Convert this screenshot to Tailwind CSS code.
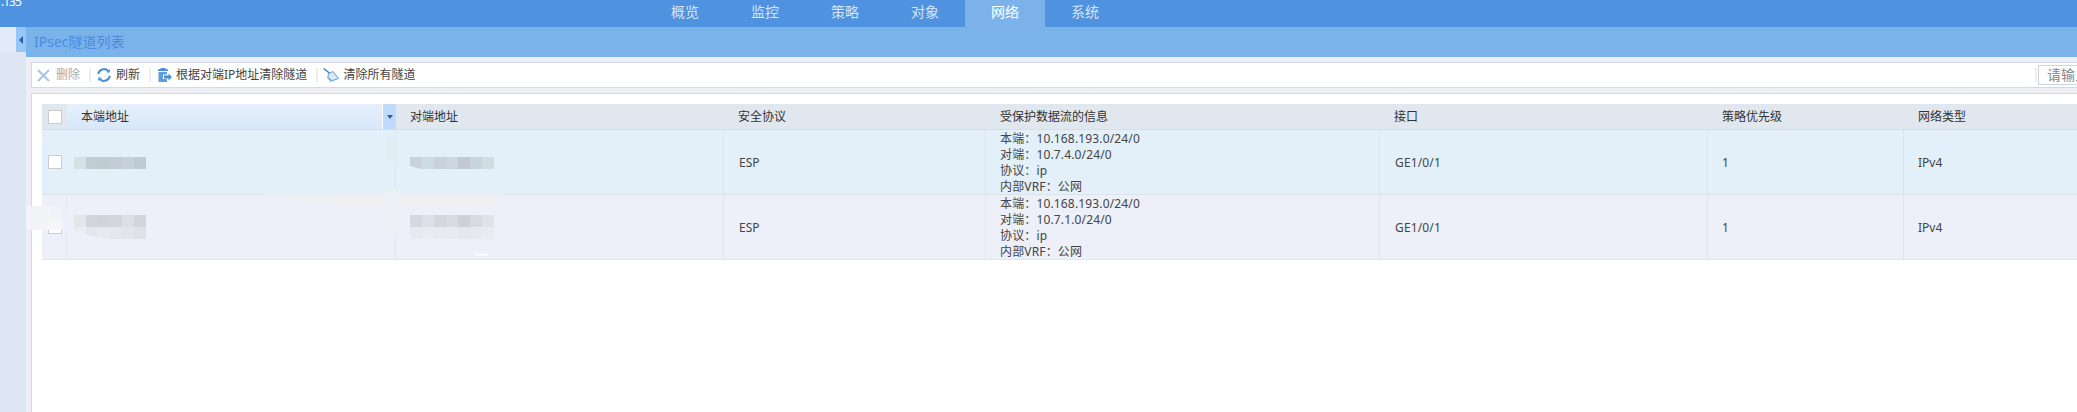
<!DOCTYPE html>
<html lang="zh-CN">
  <head>
    <meta charset="UTF-8" />
    <title>IPsec隧道列表</title>
    <script src="https://cdn.jsdelivr.net/npm/@tailwindcss/browser@4"></script>
  </head>

  <body class="relative h-[412px] w-[2077px] overflow-hidden bg-white font-['Noto_Sans','Noto_Sans_CJK_SC',sans-serif] text-[12px] text-[#444]">
    <!-- Top nav -->
    <nav class="relative flex h-[27px] bg-[#4f92e0] pl-[645px] text-[14px] leading-[24px] text-[#d5e4f6]">
      <span class="absolute left-[1px] top-[-6px] text-[12px] leading-[16px] tracking-[-1px] text-white">.135</span>
      <a class="w-20 text-center">概览</a>
      <a class="w-20 text-center">监控</a>
      <a class="w-20 text-center">策略</a>
      <a class="w-20 text-center">对象</a>
      <a class="w-20 bg-[#7bb2ea] text-center text-white">网络</a>
      <a class="w-20 text-center">系统</a>
    </nav>

    <div class="flex h-[385px]">
      <!-- Sidebar -->
      <aside class="relative w-[26px] shrink-0 bg-[#dfe6f3]">
        <div class="h-[25px] w-[16px] bg-[#e3ebf8]"></div>
        <button class="absolute right-0 top-0 flex h-[25px] w-[10px] items-center justify-center bg-[#97c5f7]">
          <span class="h-0 w-0 border-y-[4px] border-r-[4px] border-y-transparent border-r-[#2a5f9e]"></span>
        </button>
      </aside>

      <main class="flex min-w-0 flex-1 flex-col bg-[#eeeff5]">
        <h1 class="h-[30px] shrink-0 bg-[#7ab2ea] pl-2 text-[14px] leading-[30px] text-[#4a8ae0]">IPsec隧道列表</h1>

        <!-- Toolbar -->
        <div class="ml-[5px] mt-[5px] flex h-[26px] shrink-0 items-center border-y border-l border-[#d5d8e8] bg-white pl-[5px] leading-[24px]">
          <button class="flex items-center gap-[6px] text-[#aaa]">
            <svg class="size-[13px]" viewBox="0 0 13 13" fill="none" stroke="#a9c6e8" stroke-width="2.2"><path d="M1 1l11 11M12 1L1 12" /></svg>
            删除
          </button>
          <i class="ml-[9px] mr-[6px] h-[14px] w-[2px] bg-[#eee]"></i>
          <button class="flex items-center gap-[5px]">
            <svg class="size-[14px]" viewBox="0 0 14 14" fill="none" stroke="#4a90d9" stroke-width="2"><path d="M1.2 6.2A5.8 5.8 0 0 1 11.2 3M12.8 7.8A5.8 5.8 0 0 1 2.8 11" /><path d="M12.8 1v3.6H9.2zM1.2 13V9.4h3.6z" fill="#4a90d9" stroke="none" /></svg>
            刷新
          </button>
          <i class="ml-[9px] mr-[6px] h-[14px] w-[2px] bg-[#eee]"></i>
          <button class="flex items-center gap-[4px]">
            <svg class="size-[15px]" viewBox="0 0 15 15" fill="#4a90d9"><path d="M3.5 0h5v1.2h2.5V3H1V1.2h2.5z" /><path d="M1.5 4H10v2.5H6V11h4v3H1.5z" fill="#5d9cdf" /><path d="M7 7.5h4.5V5.5L15 9l-3.5 3.5v-2H7z" /></svg>
            根据对端IP地址清除隧道
          </button>
          <i class="ml-[9px] mr-[5px] h-[14px] w-[2px] bg-[#eee]"></i>
          <button class="flex items-center gap-[4px]">
            <svg class="size-[16px]" viewBox="0 0 16 16" fill="none"><path d="M0.5 1.5L6.5 6" stroke="#3f7fc4" stroke-width="1.5" /><path d="M5.5 6.5L10 4.5L15.5 11.5L10 13.5L7.5 14.5L8 12.5L6 13L6.5 11L4.8 11.3z" fill="#d9e9fa" stroke="#5d9cdf" stroke-width="1" /></svg>
            清除所有隧道
          </button>
          <i class="ml-auto mr-[1px] h-[14px] w-[2px] bg-[#eee]"></i>
          <div class="h-[20px] w-[39px] overflow-hidden whitespace-nowrap border border-r-0 border-[#c8d4e8] pl-[8px] text-[14px] leading-[18px] text-[#888]">请输入</div>
        </div>

        <!-- Table panel -->
        <section class="ml-[5px] mt-[5px] flex-1 border-l border-t border-[#d5d8e8] bg-white pl-[10px] pt-[10px]">
          <div class="grid grid-cols-[25px_329px_328px_262px_394px_328px_196px_173px] leading-[16px]">
            <!-- Header -->
            <div class="flex h-[26px] items-center border-b border-[#d8dde2] bg-[#e1e7ee] pl-[6px]"><span class="size-[14px] border border-[#ccc] bg-white"></span></div>
            <div class="relative h-[26px] border-b border-[#d8dde2] bg-gradient-to-b from-[#e6f0fc] to-[#d9e7f9] pl-[14px] leading-[25px] text-[#333]">
              本端地址
              <span class="absolute right-0 top-0 flex h-[25px] w-[14px] items-center justify-center border-l border-white bg-[#bfdafb]"><i class="border-x-[3px] border-t-[4px] border-x-transparent border-t-[#2a5f9e]"></i></span>
            </div>
            <div class="h-[26px] border-b border-[#d8dde2] bg-[#e1e7ee] pl-[14px] leading-[25px] text-[#333]">对端地址</div>
            <div class="h-[26px] border-b border-[#d8dde2] bg-[#e1e7ee] pl-[14px] leading-[25px] text-[#333]">安全协议</div>
            <div class="h-[26px] border-b border-[#d8dde2] bg-[#e1e7ee] pl-[14px] leading-[25px] text-[#333]">受保护数据流的信息</div>
            <div class="h-[26px] border-b border-[#d8dde2] bg-[#e1e7ee] pl-[14px] leading-[25px] text-[#333]">接口</div>
            <div class="h-[26px] border-b border-[#d8dde2] bg-[#e1e7ee] pl-[14px] leading-[25px] text-[#333]">策略优先级</div>
            <div class="h-[26px] border-b border-[#d8dde2] bg-[#e1e7ee] pl-[14px] leading-[25px] text-[#333]">网络类型</div>

            <!-- Row 1 -->
            <div class="flex h-[65px] items-center border-b border-[#dde3e8] bg-[#e3f0f9] pl-[6px]"><span class="size-[14px] border border-[#ccc] bg-white"></span></div>
            <div class="flex h-[65px] items-center border-b border-r border-[#dde3e8] bg-[#e3f0f9] pl-[7px]">
              <div class="mt-[2px] flex"><i class="h-[12px] w-[12px] bg-[#d6e1e6]"></i><i class="h-[12px] w-[12px] bg-[#c1cdd4]"></i><i class="h-[12px] w-[12px] bg-[#c0ccd0]"></i><i class="h-[12px] w-[12px] bg-[#c2cdd6]"></i><i class="h-[12px] w-[12px] bg-[#c7d0d9]"></i><i class="h-[12px] w-[12px] bg-[#bfcbd3]"></i></div>
            </div>
            <div class="flex h-[65px] items-center border-b border-r border-[#dde3e8] bg-[#e3f0f9] pl-[14px]">
              <div class="mt-[2px] flex"><i class="h-[12px] w-[12px] bg-[#c9d1dc]"></i><i class="h-[12px] w-[12px] bg-[#cddbe3]"></i><i class="h-[12px] w-[12px] bg-[#c9d1da]"></i><i class="h-[12px] w-[12px] bg-[#ccd6df]"></i><i class="h-[12px] w-[12px] bg-[#c3c9d4]"></i><i class="h-[12px] w-[12px] bg-[#c8d5dc]"></i><i class="h-[12px] w-[12px] bg-[#d1dce3]"></i></div>
            </div>
            <div class="h-[65px] border-b border-r border-[#dde3e8] bg-[#e3f0f9] pl-[15px] leading-[65px]">ESP</div>
            <div class="h-[65px] overflow-hidden border-b border-r border-[#dde3e8] bg-[#e3f0f9] pl-[14px] pt-[1px] tracking-[0.15px]"><p>本端：10.168.193.0/24/0</p><p>对端：10.7.4.0/24/0</p><p>协议：ip</p><p>内部VRF：公网</p></div>
            <div class="h-[65px] border-b border-r border-[#dde3e8] bg-[#e3f0f9] pl-[15px] leading-[65px] tracking-[0.15px]">GE1/0/1</div>
            <div class="h-[65px] border-b border-r border-[#dde3e8] bg-[#e3f0f9] pl-[14px] leading-[65px]">1</div>
            <div class="h-[65px] border-b border-[#dde3e8] bg-[#e3f0f9] pl-[14px] leading-[65px]">IPv4</div>

            <!-- Row 2 -->
            <div class="flex h-[65px] items-center border-b border-r border-[#e3e5ea] bg-[#edf0f8] pl-[6px]"><span class="size-[14px] border border-[#ccc] bg-white"></span></div>
            <div class="flex h-[65px] items-center border-b border-r border-[#e3e5ea] bg-[#edf0f8] pl-[7px]">
              <div class="flex flex-col">
                <div class="flex"><i class="h-[12px] w-[12px] bg-[#e4e6ea]"></i><i class="h-[12px] w-[12px] bg-[#d2d5dc]"></i><i class="h-[12px] w-[12px] bg-[#d1d3da]"></i><i class="h-[12px] w-[12px] bg-[#d3d6dd]"></i><i class="h-[12px] w-[12px] bg-[#dcdfe4]"></i><i class="h-[12px] w-[12px] bg-[#d2d4d9]"></i></div>
                <div class="flex"><i class="h-[12px] w-[12px] bg-[#ebedf3]"></i><i class="h-[12px] w-[12px] bg-[#e4e6ee]"></i><i class="h-[12px] w-[12px] bg-[#e7e9f0]"></i><i class="h-[12px] w-[12px] bg-[#e4e7ed]"></i><i class="h-[12px] w-[12px] bg-[#e3e5ea]"></i><i class="h-[12px] w-[12px] bg-[#dfe1e7]"></i></div>
              </div>
            </div>
            <div class="flex h-[65px] items-center border-b border-r border-[#e3e5ea] bg-[#edf0f8] pl-[14px]">
              <div class="flex flex-col">
                <div class="flex"><i class="h-[12px] w-[12px] bg-[#d6d7e0]"></i><i class="h-[12px] w-[12px] bg-[#dce0e7]"></i><i class="h-[12px] w-[12px] bg-[#d5d7de]"></i><i class="h-[12px] w-[12px] bg-[#d9dbe3]"></i><i class="h-[12px] w-[12px] bg-[#d0d0d9]"></i><i class="h-[12px] w-[12px] bg-[#d8dce1]"></i><i class="h-[12px] w-[12px] bg-[#e0e3e8]"></i></div>
                <div class="flex"><i class="h-[12px] w-[12px] bg-[#e7e9f1]"></i><i class="h-[12px] w-[12px] bg-[#e8ebf0]"></i><i class="h-[12px] w-[12px] bg-[#e7e9ef]"></i><i class="h-[12px] w-[12px] bg-[#e8eaf1]"></i><i class="h-[12px] w-[12px] bg-[#e5e7ed]"></i><i class="h-[12px] w-[12px] bg-[#e6e9ef]"></i><i class="h-[12px] w-[12px] bg-[#e9ebf0]"></i></div>
              </div>
            </div>
            <div class="h-[65px] border-b border-r border-[#e3e5ea] bg-[#edf0f8] pl-[15px] leading-[65px]">ESP</div>
            <div class="h-[65px] overflow-hidden border-b border-r border-[#e3e5ea] bg-[#edf0f8] pl-[14px] pt-[1px] tracking-[0.15px]"><p>本端：10.168.193.0/24/0</p><p>对端：10.7.1.0/24/0</p><p>协议：ip</p><p>内部VRF：公网</p></div>
            <div class="h-[65px] border-b border-r border-[#e3e5ea] bg-[#edf0f8] pl-[15px] leading-[65px] tracking-[0.15px]">GE1/0/1</div>
            <div class="h-[65px] border-b border-r border-[#e3e5ea] bg-[#edf0f8] pl-[14px] leading-[65px]">1</div>
            <div class="h-[65px] border-b border-[#e3e5ea] bg-[#edf0f8] pl-[14px] leading-[65px]">IPv4</div>
          </div>
        </section>
      </main>
    </div>

    <!-- Smudges left over the screenshot -->
    <svg class="pointer-events-none absolute left-0 top-0" width="2077" height="412">
      <rect x="26" y="206" width="24" height="24" fill="#f3f4f8" />
      <rect x="50" y="206" width="12" height="12" fill="#f1f2f8" />
      <rect x="50" y="218" width="12" height="12" fill="#f6f6f8" />
      <rect x="62" y="210" width="12" height="24" fill="#ecf0f8" />
      <polygon points="74,232 74,242 125,242" fill="#edf0f8" />
      <polygon points="260,194 502,194 497,207 340,207" fill="#eef0f4" />
      <rect x="386" y="135" width="11" height="27" fill="#e1edf4" />
      <rect x="386" y="188" width="12" height="6" fill="#e9f0f4" />
      <rect x="386" y="194" width="12" height="41" fill="#edf0f5" />
      <polygon points="410,166 410,170 425,170" fill="#e3f0f9" />
      <polygon points="410,239 450,240 462,242 410,242" fill="#edf0f8" />
      <ellipse cx="482" cy="254.5" rx="8" ry="1.5" fill="#f8f9fc" />
    </svg>
  </body>
</html>
